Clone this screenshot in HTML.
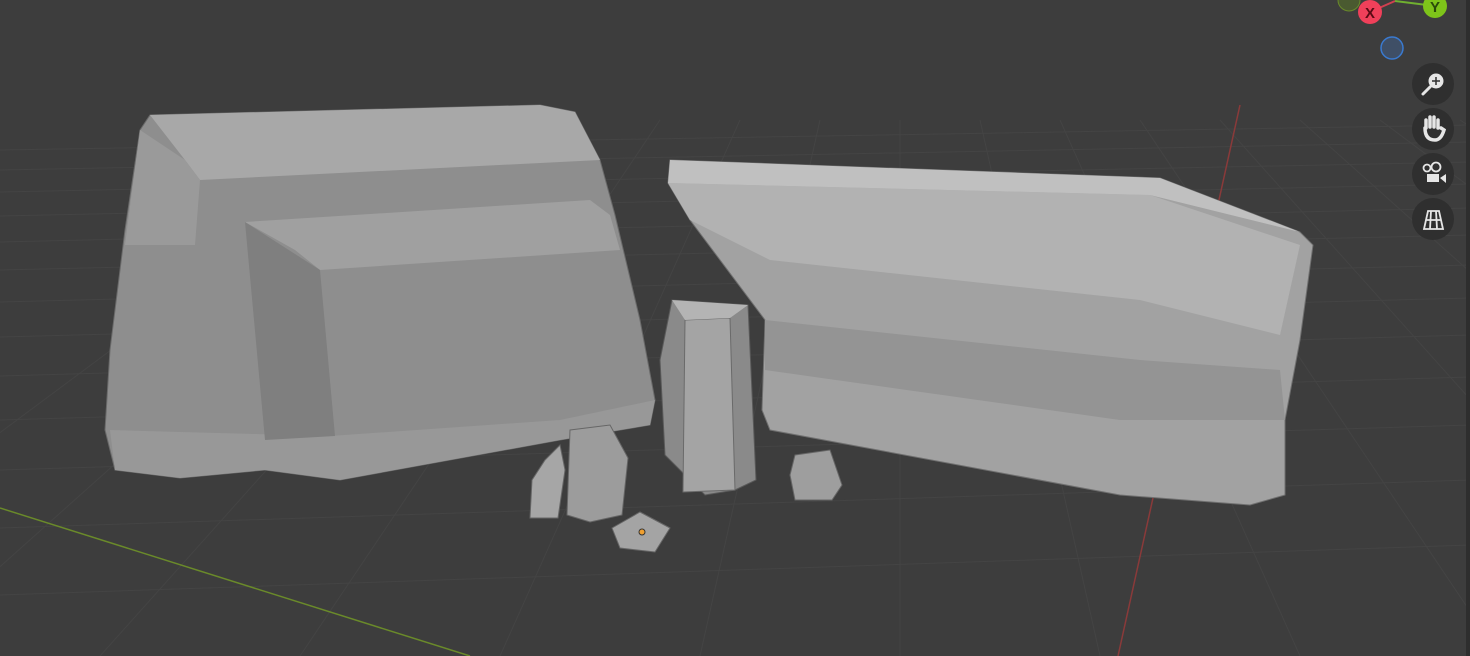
<!DOCTYPE html>
<html><head><meta charset="utf-8"><style>
html,body{margin:0;padding:0;background:#3d3d3d;width:1470px;height:656px;overflow:hidden}
svg{display:block}
</style></head><body>
<svg width="1470" height="656" viewBox="0 0 1470 656" xmlns="http://www.w3.org/2000/svg" font-family="Liberation Sans, sans-serif">
<rect width="1470" height="656" fill="#3d3d3d"/>
<g stroke="#444" stroke-width="1" fill="none">
<path d="M0 150 L1470 125 M0 170 L1470 142 M0 192 L1470 162 M0 216 L1470 184 M0 242 L1470 208 M0 270 L1470 235 M0 302 L1470 265 M0 337 L1470 298 M0 376 L1470 335 M0 420 L1470 377 M0 470 L1470 425 M0 528 L1470 480 M0 595 L1470 545"/>
<path d="M-300 656 L420 120 M-100 656 L500 120 M100 656 L580 120 M300 656 L660 120 M500 656 L740 120 M700 656 L820 120 M900 656 L900 120 M1100 656 L980 120 M1300 656 L1060 120 M1500 656 L1140 120 M1700 656 L1220 120 M1900 656 L1300 120 M2100 656 L1380 120 M2300 656 L1460 120"/>
</g>
<line x1="0" y1="508" x2="470" y2="656" stroke="#6a8a2a" stroke-width="1.5"/>
<line x1="1240" y1="105" x2="1118" y2="656" stroke="#8a3a3a" stroke-width="1.5"/>
<rect x="1466" y="0" width="4" height="656" fill="#2e2e2e"/>
<!-- left rock -->
<polygon points="150,115 540,105 575,112 600,160 615,215 640,320 655,400 650,425 560,440 340,480 265,470 180,478 115,470 105,430 110,350 125,230 140,130" fill="#8e8e8e" stroke="#6a6a6a"/>
<polygon points="150,115 540,105 575,112 600,160 200,180 185,160" fill="#a8a8a8"/>
<polygon points="245,222 590,200 610,215 620,250 320,270 295,250" fill="#a0a0a0"/>
<polygon points="140,130 185,160 200,180 195,245 125,245" fill="#9a9a9a"/>
<polygon points="110,430 180,432 330,436 560,420 655,400 650,425 560,440 340,480 265,470 180,478 115,470" fill="#989898"/>
<polygon points="245,222 320,270 335,436 265,440" fill="#7f7f7f"/>
<!-- right rock -->
<polygon points="670,160 1160,178 1300,232 1313,245 1300,340 1285,420 1285,495 1250,505 1120,495 770,430 762,410 765,320 690,220 668,183" fill="#a2a2a2" stroke="#707070"/>
<polygon points="668,183 1150,195 1300,245 1280,335 1140,300 770,260 690,220" fill="#b2b2b2"/>
<polygon points="765,320 1140,360 1280,370 1285,420 1120,420 765,370" fill="#949494"/>
<polygon points="670,160 1160,178 1300,232 1150,195 668,183" fill="#c0c0c0"/>
<!-- pillars -->
<polygon points="672,300 748,305 756,480 735,490 705,495 665,455 660,360" fill="#8a8a8a" stroke="#5a5a5a"/>
<polygon points="685,320 730,318 735,490 683,492" fill="#a4a4a4" stroke="#6a6a6a"/>
<polygon points="672,300 748,305 730,318 685,320" fill="#b4b4b4"/>
<!-- small rocks -->
<polygon points="570,430 610,425 628,458 622,515 590,522 567,515" fill="#9c9c9c" stroke="#666"/>
<polygon points="545,460 560,445 565,470 558,518 530,518 532,480" fill="#a6a6a6" stroke="#666"/>
<polygon points="612,528 640,512 670,528 655,552 620,548" fill="#a4a4a4" stroke="#666"/>
<polygon points="795,455 830,450 842,485 832,500 795,500 790,475" fill="#9e9e9e" stroke="#666"/>
<circle cx="642" cy="532" r="3" fill="#f0a030" stroke="#333" stroke-width="1"/>
<!-- gizmo -->
<line x1="1370" y1="12" x2="1395" y2="1" stroke="#d04050" stroke-width="2"/>
<line x1="1395" y1="1" x2="1435" y2="6" stroke="#70b030" stroke-width="2"/>
<circle cx="1349" cy="0" r="11" fill="#4a5a30" stroke="#6a8a2a"/>
<circle cx="1370" cy="12" r="12" fill="#f0405a"/>
<text x="1370" y="18" font-size="15" font-weight="bold" text-anchor="middle" fill="#5a0a14">X</text>
<circle cx="1435" cy="6" r="12" fill="#7ec41a"/>
<text x="1435" y="12" font-size="15" font-weight="bold" text-anchor="middle" fill="#2a4a0a">Y</text>
<circle cx="1392" cy="48" r="11" fill="#3f4f66" stroke="#3a7ad0" stroke-width="1.5"/>
<g fill="#2f2f2f"><circle cx="1433" cy="84" r="21"/><circle cx="1433" cy="129" r="21"/><circle cx="1433" cy="174" r="21"/><circle cx="1433" cy="219" r="21"/></g>
<g fill="#e6e6e6" stroke="#e6e6e6">
<circle cx="1436" cy="81" r="7" fill="#e6e6e6"/>
<line x1="1430" y1="87" x2="1423" y2="94" stroke-width="3" stroke-linecap="round"/>
<path d="M1436 77 v8 M1432 81 h8" stroke="#2f2f2f" stroke-width="1.5"/>
<path d="M1426 128 v-8 M1430 127 v-10 M1434 127 v-10 M1438 128 v-8 M1425 128 q0 12 10 12 q6 0 9-10 l-3 -2" stroke-width="3.5" stroke-linecap="round" fill="none"/>
<circle cx="1427" cy="168" r="3.5" fill="none" stroke-width="1.8"/><circle cx="1436" cy="167" r="4.5" fill="none" stroke-width="1.8"/>
<rect x="1427" y="174" width="12" height="8" stroke-width="0"/><polygon points="1440,178 1446,174 1446,183" stroke-width="0"/>
<path d="M1424 229 L1428 211 H1439 L1443 229 Z M1426 220 H1441 M1431 211 L1430 229 M1436 211 L1437 229" fill="none" stroke-width="1.8"/>
</g>
</svg>
</body></html>
